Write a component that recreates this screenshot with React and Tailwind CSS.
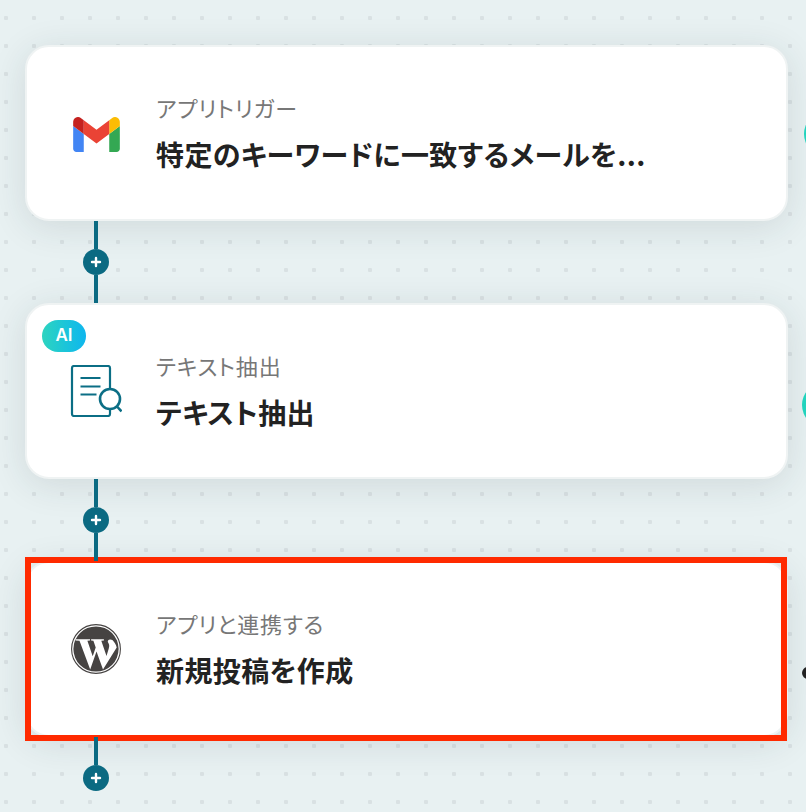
const font = "font-['Noto_Sans_CJK_JP','Noto_Sans',sans-serif] [font-feature-settings:'palt']";

function GmailIcon() {
  return (
    <svg viewBox="52 42 88 66" className="mt-[2px] w-[47px] h-[35px]">
      <path fill="#4285f4" d="M58 108h14V74L52 59v43c0 3.32 2.69 6 6 6" />
      <path fill="#34a853" d="M120 108h14c3.32 0 6-2.69 6-6V59l-20 15" />
      <path fill="#fbbc04" d="M120 48v26l20-15v-8c0-7.42-8.47-11.65-14.4-7.2" />
      <path fill="#ea4335" d="M72 74V48l24 18 24-18v26L96 92" />
      <path fill="#c5221f" d="M52 51v8l20 15V48l-5.6-4.2c-5.94-4.45-14.4-.22-14.4 7.2" />
    </svg>
  );
}

function DocSearchIcon() {
  return (
    <svg viewBox="0 0 52 52" className="w-[52px] h-[52px]" fill="none" stroke="#0b6e85" strokeWidth="2.2">
      <rect x="2" y="1" width="38" height="50" rx="2" />
      <path d="M10.5 13h20M10.5 21.500h20M10.500 29.500h16" />
      <circle cx="40" cy="34" r="10" fill="white" strokeWidth="2.6" />
      <path d="M47 41.500l4.500 5" strokeWidth="2.6" />
    </svg>
  );
}

function WordpressIcon() {
  return (
    <svg viewBox="0 0 50 50" className="w-[50px] h-[50px]">
      <circle cx="25" cy="25" r="24.4" fill="white" stroke="#464342" strokeWidth="1.1" />
      <circle cx="25" cy="25" r="22.6" fill="#464342" />
      <path
        fill="white"
        d="M4.500 15.200H19v1.200l-2.600.4 5.300 15.400 3-8.600-2.300-6.800-2.300-.4v-1.200h12.800v1.200l-2.600.4 5.200 15.200 2.200-7.200c1-3.200.4-4.600-.6-6.200-.9-1.600.2-3.200 2-3.200.9 0 1.700.3 2.300.7 2.200 2.200 3.500 4.600 4.300 7.300L32 45.500 25.500 27.500 19.200 45.500 8.500 16.800l-4-.4z"
      />
    </svg>
  );
}

function Connector({ last }) {
  return (
    <div className="relative z-10 ml-[58px] flex h-[82px] w-[26px] flex-col items-center">
      <div className="h-[28px] w-1 bg-[#0b6a82]" />
      <div className="flex h-[26px] w-[26px] shrink-0 items-center justify-center rounded-full bg-[#0b6a82]">
        <svg viewBox="0 0 12 12" className="h-3 w-3" stroke="white" strokeWidth="2.4" strokeLinecap="round">
          <path d="M6 2v8M2 6h8" />
        </svg>
      </div>
      {!last && <div className="h-[28px] w-1 bg-[#0b6a82]" />}
    </div>
  );
}

function FlowCard({ icon, label, title, children }) {
  return (
    <div className="relative flex h-[176px] w-[763px] items-center rounded-[24px] border-2 border-[#eff3f3] bg-white shadow-[0_6px_36px_rgba(30,50,55,0.12)]">
      <div className="flex w-[129px] shrink-0 justify-center pl-[9px]">{icon}</div>
      <div className="flex flex-col pb-[4px]">
        <div className="text-[22px] leading-[30px] tracking-[0.8px] text-[#777777]">{label}</div>
        <div className="mt-[16px] text-[28px] leading-[32px] tracking-[0.4px] font-semibold text-[#222222]">{title}</div>
      </div>
      {children}
    </div>
  );
}

export default function App() {
  return (
    <div
      className={`${font} h-[812px] w-[806px] overflow-hidden bg-[#e8f1f2] bg-[radial-gradient(circle,#d9e1e3_2px,transparent_2.5px)] bg-[size:28px_28px] bg-[position:-8px_4px] pl-[25px] pt-[45px]`}
    >
      <FlowCard icon={<GmailIcon />} label="アプリトリガー" title="特定のキーワードに一致するメールを...">
        <div className="absolute left-[777px] top-[65px] h-[44px] w-[44px] rounded-full bg-[#22d3bd]" />
      </FlowCard>
      <Connector />
      <FlowCard icon={<DocSearchIcon />} label="テキスト抽出" title="テキスト抽出">
        <div className="absolute left-[15px] top-[15px] flex h-8 w-11 items-center justify-center rounded-full bg-gradient-to-r from-[#2dd4bf] to-[#0fb6ee] text-[17px] font-semibold text-white font-['Inter',sans-serif]">
          AI
        </div>
        <div className="absolute left-[775px] top-[78px] h-[44px] w-[44px] rounded-full bg-[#22d3bd]" />
      </FlowCard>
      <Connector />
      <FlowCard icon={<WordpressIcon />} label="アプリと連携する" title="新規投稿を作成">
        <div className="absolute -top-[6px] -bottom-[6px] -left-[2px] -right-[1px] border-[6px] border-[#ff2a00]" />
        <div className="absolute left-[775px] top-[104px] h-[12px] w-[12px] rounded-full bg-[#222222]" />
      </FlowCard>
      <Connector last />
    </div>
  );
}
